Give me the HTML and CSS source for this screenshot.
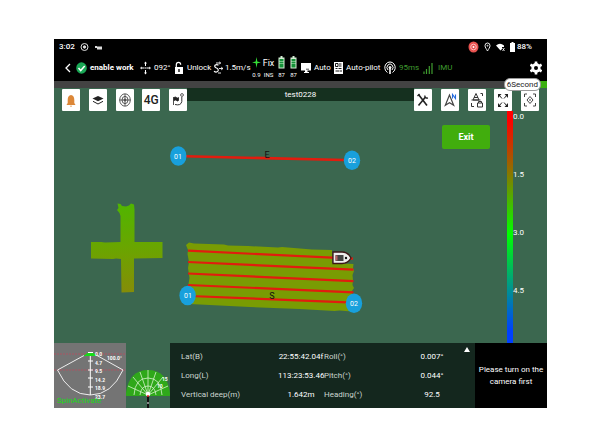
FILE: index.html
```html
<!DOCTYPE html>
<html lang="en">
<head>
<meta charset="utf-8">
<meta name="viewport" content="width=device-width, initial-scale=1">
<title>test0228</title>
<link rel="stylesheet" href="styles.css">
</head>
<body>
<main class="device">
  <header class="header">
    <div class="status">
      <span>3:02</span>
      <svg width="9" height="10" viewBox="0 0 9 10" fill="none" stroke="#ddd"><circle cx="4.500" cy="5" r="3.500"/><circle cx="4.500" cy="5" r="1.200" fill="#ddd"/></svg>
      <svg width="9" height="10" viewBox="0 0 9 10" fill="#ddd"><path d="M1 4h2v.5h5v3H3V6H1z"/></svg>
      <span class="spacer"></span>
      <svg width="11" height="12" viewBox="0 0 11 12" fill="none"><ellipse cx="5.500" cy="6" rx="5" ry="5.500" fill="#e8524f"/><circle cx="5.500" cy="6" r="2.800" stroke="#fbb"/><circle cx="5.500" cy="6" r="1" fill="#fff"/></svg>
      <svg width="7" height="10" viewBox="0 0 7 10" fill="none" stroke="#eee"><path d="M3.500 9C2.500 7 1 5.500 1 3.700a2.500 2.700 0 0 1 5 0C6 5.500 4.500 7 3.500 9z"/><circle cx="3.500" cy="3.700" r=".5"/></svg>
      <svg width="9" height="10" viewBox="0 0 9 10"><path d="M0 3.500Q4 0 8 3.500V5H6v2L4.500 8.500z" fill="#fff"/><path d="M6.500 6l2 3m0-3l-2 3" stroke="#fff" stroke-width=".8"/></svg>
      <span class="battery">
        <svg width="5" height="10" viewBox="0 0 5 10" fill="#fff"><path d="M1.500 0h2v1H5v9H0V1h1.500z"/></svg>
        <span>88%</span>
      </span>
    </div>
    <div class="toolbar">
      <button class="plain" aria-label="Back"><svg width="6" height="12" viewBox="0 0 6 12" fill="none" stroke="#fff" stroke-width="1.300"><path d="M5 2L1 6l4 4"/></svg></button>
      <div class="item strong">
        <svg width="11" height="12" viewBox="0 0 11 12"><ellipse cx="5.500" cy="6" rx="5.300" ry="5.800" fill="#19a755"/><path d="M2.500 6l2.200 2.500L8.700 4" fill="none" stroke="#fff" stroke-width="1.500"/></svg>
        <span>enable work</span>
      </div>
      <div class="item">
        <svg width="11" height="14" viewBox="0 0 11 14" fill="#fff" stroke="#fff"><path d="M5.500 2v3M5.500 9v3M1.500 7h2.700M6.800 7h2.700M4.500 7h2" fill="none"/><path d="M5.500 .5l1.500 2H4zM5.500 13.500l1.500-2H4zM0 7l1.800-1.500v3zM11 7L9.200 5.500v3z" stroke="none"/></svg>
        <span>092°</span>
      </div>
      <div class="item">
        <svg width="10" height="14" viewBox="0 0 10 14"><path d="M2.300 7V3.800a2.200 2.500 0 0 1 4.400 0" fill="none" stroke="#fff" stroke-width="1.200"/><path d="M1 6h8v7H1z" fill="#fff"/><path d="M5 8v3" stroke="#000" stroke-width="1.300"/></svg>
        <span>Unlock</span>
      </div>
      <div class="item tight">
        <svg width="10" height="14" viewBox="0 0 10 14" fill="none" stroke="#fff"><path d="M5.500 4.300Q4 3 2.300 4 .8 5.500 3 6.800q3 1.200 2 3.200-1.500 2-4 .3" stroke-width="1.200"/><path d="M3 2h4M6 7.500h4M5 12h3" stroke-width=".9"/><path d="M6 .8L8 2 6 3.200M8 6l2 1.500L8 9" stroke-width=".7"/></svg>
        <span>1.5m/s</span>
      </div>
      <div class="pair">
        <div class="stack"><svg width="9" height="12" viewBox="0 0 9 12"><path d="M4.500 1l.8 4.500L9 6.500l-3.700.8L4.500 12l-.8-4.700L0 6.500l3.700-1z" fill="#35e035"/></svg><small>0.9</small></div>
        <div class="stack"><span>Fix</span><small>INS</small></div>
      </div>
      <div class="pair">
        <div class="stack"><svg width="7" height="13" viewBox="0 0 7 13"><path d="M2.500 0h2v1.500H6.500v11H.5v-11h2z" fill="#d5eed5"/><path d="M1.500 3h4v2h-4zM1.500 5.500h4v2h-4zM1.500 8h4v3.500h-4z" fill="#159238"/></svg><small>87</small></div>
        <div class="stack"><svg width="7" height="13" viewBox="0 0 7 13"><path d="M2.500 0h2v1.500H6.500v11H.5v-11h2z" fill="#d5eed5"/><path d="M1.500 3h4v2h-4zM1.500 5.500h4v2h-4zM1.500 8h4v3.500h-4z" fill="#159238"/></svg><small>87</small></div>
      </div>
      <div class="item">
        <svg width="10" height="12" viewBox="0 0 10 12" fill="#fff"><path d="M0 1h10v7.500H6.500V10H8v1H3v-1h1V8.500H0z"/><path d="M5 7.200h3" stroke="#000" stroke-width=".7"/></svg>
        <span>Auto</span>
      </div>
      <div class="item">
        <svg width="9" height="12" viewBox="0 0 9 12"><path d="M0 0h9v12H0z" fill="#fff"/><path d="M1.500 1.500h2.500v3H1.500zM5 2h2.500M5 4h2.500M1.500 6.500h2M4.500 6.500h3M1.500 9h4M7 8v2" fill="none" stroke="#000" stroke-width=".9"/></svg>
        <span>Auto-pilot</span>
      </div>
      <div class="item green">
        <svg width="12" height="14" viewBox="0 0 12 14" fill="none" stroke="#fff"><path d="M3.500 11.500A5.200 5.600 0 1 1 8.500 11.500M4 9A3 3.400 0 1 1 8 9"/><circle cx="6" cy="6.500" r="1" fill="#fff"/><path d="M6 7v6" stroke-width="1.600"/></svg>
        <span>95ms</span>
      </div>
      <div class="item green signal">
        <svg width="10" height="12" viewBox="0 0 10 12" fill="none" stroke="#3f9c2f"><path d="M1 12V9.500M3.500 12V7M6.300 12V4M9 12V1" stroke-width="1.200"/></svg>
        <span>IMU</span>
      </div>
      <button class="plain" aria-label="Settings"><svg width="12" height="14" viewBox="0 0 12 14"><g transform="translate(6 7)" fill="#fff"><path d="M-1.300-6.500h2.600v13h-2.600z"/><path d="M-1.300-6.500h2.600v13h-2.600z" transform="rotate(60)"/><path d="M-1.300-6.500h2.600v13h-2.600z" transform="rotate(120)"/><ellipse rx="4.600" ry="5"/><circle r="2" fill="#000"/></g></svg></button>
    </div>
  </header>

  <div class="band"><span class="badge">6Second</span></div>

  <section class="map">
    <svg class="drawing" viewBox="54 88 493 320" role="img" aria-label="Survey map">
      <defs>
        <linearGradient id="cross" x1="0" y1="0" x2="0" y2="1"><stop offset="0" stop-color="#50b500"/><stop offset=".5" stop-color="#6aa500"/><stop offset="1" stop-color="#858c08"/></linearGradient>
      </defs>
      <path fill="url(#cross)" d="M117.500 203.500l3 .5 1.500 2 4 .5 3-1 2-2 3 1 .5 5v32.500h28V258l-28.500.5V292l-12.500.5-.5-33.500-5-.5-3 .5-22-.5V242h10l4 .5 15.500-.5v-26l-1-3-2.500-3 1.500-2z"/>
      <path fill="#799c03" d="M186 245l3-2.500 5 1 30 1 4 1 20 .5 30 1.500 4-.5 30 2.500 20 .5v13l21.500 1-.5 4 1 3-1.500 4 .5 5-.5 5 1.500 3-2 3 .5 18-1 2.500-12-1-5 .5-35-2-50-2-60-3-1-20 1-6-1.500-10 1-6-1.500-8 .5-4z"/>
      <g stroke="#e21c0e" stroke-width="2.200">
        <path d="M188 250.700l165 8M188 262l165.500 7.600M188 273.500l165.500 7.700M188 285l165.500 7.300M190 296l164 6.700"/>
        <path d="M186 156.300l158 3.700" stroke-width="2.600"/>
      </g>
      <path d="M333 252h9q6 0 9 6-3 5.500-9 5.500h-9z" fill="#eee" stroke="#3d1717" stroke-width="1.300"/>
      <path d="M335.500 255h8v6h-8z" fill="#444"/><path d="M335.500 255.500h2v5h-2z" fill="#b66"/><circle cx="346" cy="258" r="1.200" fill="#111"/>
      <g fill="#18a0dc">
        <ellipse cx="178.300" cy="156" rx="8.200" ry="9.800"/><ellipse cx="352" cy="160.300" rx="8.200" ry="9.800"/>
        <ellipse cx="187.600" cy="295.500" rx="8.200" ry="9.800"/><ellipse cx="354" cy="303.300" rx="8.200" ry="9.800"/>
      </g>
      <g class="pin-text"><text x="178" y="159">01</text><text x="352" y="163">02</text><text x="188" y="298">01</text><text x="354" y="306">02</text></g>
      <g class="line-text"><text x="267" y="158">E</text><text x="272" y="299">S</text></g>
    </svg>

    <div class="overlay">
      <nav class="tools">
        <div class="group">
          <button class="tool" aria-label="Alerts"><svg viewBox="0 0 18 22"><path d="M9 6q-3.300.5-3.300 5v3L4.500 16h9l-1.200-2v-3Q12.300 6.500 9 6zM7.800 16.800h2.400L9 18z" fill="#dc8738"/></svg></button>
          <button class="tool" aria-label="Layers"><svg viewBox="0 0 18 22"><path d="M3.500 9.500L9 7l5.500 2.500L9 12.300z" fill="#222"/><path d="M4 12.300L9 15l5-2.700" fill="none" stroke="#222"/></svg></button>
          <button class="tool" aria-label="Center"><svg viewBox="0 0 18 22" fill="none" stroke="#333" stroke-width=".8"><ellipse cx="9" cy="11" rx="5.300" ry="6.200"/><ellipse cx="9" cy="11" rx="3" ry="3.600"/><path d="M9 5v12M3.500 11h11"/><circle cx="9" cy="11" r="1"/></svg></button>
          <button class="tool four-g">4G</button>
          <button class="tool" aria-label="Route"><svg viewBox="0 0 18 22"><path d="M4.500 16V8M5 8.500q1.500-1 2.500 0t2 0v3q-1 1-2 0t-2.500 0z" fill="#222" stroke="#222" stroke-width=".8"/><path d="M6 15.500q6 1.500 6.800-3V8" fill="none" stroke="#333"/><circle cx="13" cy="6" r="1.400" fill="none" stroke="#333" stroke-width=".8"/></svg></button>
        </div>
        <h1 class="title">test0228</h1>
        <div class="group">
          <button class="tool" aria-label="Repair"><svg viewBox="0 0 18 22" fill="none" stroke="#222"><path d="M4.500 5.500l8.500 11" stroke-width="1.600"/><path d="M4.500 16.500l7-8.500" stroke-width="1.600"/><path d="M10.800 6.500q0 3 3.200 2.500M3.500 7l2-2" stroke-width="1.300"/></svg></button>
          <button class="tool" aria-label="North"><svg viewBox="0 0 18 22" fill="none"><path d="M8.500 6L4.300 16.300l4.200-2.500 4.200 2.500z" stroke="#444" stroke-width="1.200"/><path d="M11.500 9.500V5.500l3 4v-4" stroke="#246bdc" stroke-width="1.100"/></svg></button>
          <button class="tool" aria-label="Lock view"><svg viewBox="0 0 18 22" fill="none" stroke="#333"><path d="M5 11l3-6.500L11 11zM6 8.500h4M3.500 11h9"/><path d="M12.500 4.500h2V7M3.500 14v3.500H6"/><path d="M9.500 14h5v4h-5zM10.500 14v-1.500h3V14"/></svg></button>
          <button class="tool" aria-label="Expand"><svg viewBox="0 0 18 22" fill="#222" stroke="#222"><path d="M5 6l3 3.500M13 6l-3 3.500M5 17l3-3.500M13 17l-3-3.500"/><path d="M4 5h3.500L4 9zM14 5h-3.500L14 9zM4 18h3.500L4 14zM14 18h-3.500l3.500-4z" stroke="none"/></svg></button>
          <button class="tool" aria-label="Focus"><svg viewBox="0 0 18 22" fill="none" stroke="#444"><path d="M3.500 8V5H6M12 5h2.500v3M14.500 14v3H12M6 17H3.500v-3M9 7.500l3 3.500-3 3.500L6 11z"/><circle cx="9" cy="11" r=".4"/></svg></button>
        </div>
      </nav>

      <div class="side">
        <button class="exit">Exit</button>
        <div class="legend">
          <div class="ramp"></div>
          <div class="marks"><span>0.0</span><span>1.5</span><span>3.0</span><span>4.5</span></div>
        </div>
      </div>

      <div class="panels">
        <svg class="sonar" viewBox="54 343 72 65" role="img" aria-label="Sonar sector">
          <path d="M54 354h72M54 370h72" stroke="#c3485c" stroke-width=".7" stroke-dasharray="2 1"/>
          <path d="M84 355.500l-26.500 14.500Q69 395 90.300 395T123 370L97 355.500" fill="none" stroke="#eee"/>
          <path d="M90.300 352v43M88 352.500h5M88 361h5M88 370h5M88 378h5M88 387h5" stroke="#fff" fill="none"/>
          <path d="M83.500 356l4-3h6l4 3z" fill="#16dc16"/>
          <g class="sonar-text"><text x="95" y="356">0.0</text><text x="95" y="365">4.7</text><text x="95" y="373">9.5</text><text x="95" y="382">14.2</text><text x="95" y="390">18.9</text><text x="95" y="399">23.7</text><text x="107" y="360">100.0°</text></g>
          <text class="spin" x="57" y="403">SpinActivate</text>
        </svg>
        <svg class="fan" viewBox="126 343 44 65" role="img" aria-label="Depth fan">
          <path d="M126 396v-3Q129 370 148 370t22 23v3z" fill="#2fa81a"/>
          <g fill="none" stroke="#d5f2cc" stroke-width=".8">
            <path d="M134 395q1-17 14-17t14 17M140 395q1-9 8-9t8 9"/>
            <path d="M148 395v-25M148 395l-8-23M148 395l-15-18M148 395l-20-9M148 395l8-23M148 395l15-18M148 395l20-9"/>
          </g>
          <path d="M148 396v12" stroke="#111" stroke-width="2"/>
          <circle cx="148" cy="394" r="2.300" fill="#fff"/><circle cx="148" cy="396" r="1" fill="#e22"/><path d="M147 403h2" stroke="#fff"/>
          <g class="sonar-text"><text x="157" y="388">10</text><text x="162" y="381">15</text></g>
        </svg>
        <div class="data">
          <table>
            <tbody>
              <tr><th scope="row">Lat(B)</th><td>22:55:42.04f</td><th scope="row">Roll(°)</th><td>0.007°</td></tr>
              <tr><th scope="row">Long(L)</th><td>113:23:53.46</td><th scope="row">Pitch(°)</th><td>0.044°</td></tr>
              <tr><th scope="row">Vertical deep(m)</th><td>1.642m</td><th scope="row">Heading(°)</th><td>92.5</td></tr>
            </tbody>
          </table>
          <button class="plain" aria-label="Expand data"><svg width="6" height="5" viewBox="0 0 6 5"><path d="M0 5l3-5 3 5z" fill="#fff"/></svg></button>
        </div>
        <p class="camera">Please turn on the camera first</p>
      </div>
    </div>
  </section>
</main>
</body>
</html>
```
FILE: styles.css
```css
* { box-sizing: border-box; }
body {
  margin: 0;
  background: #fff;
  font: 8px/12px Roboto, "Liberation Sans", sans-serif;
  color: #fff;
}
button { font: inherit; color: inherit; border: 0; padding: 0; margin: 0; }
svg { display: block; flex: none; }
.device { margin: 39px 53px 0 54px; }

.header { background: #000; height: 42px; }
.status { display: flex; align-items: center; gap: 5px; height: 15px; padding: 0 15px 0 5px; font-weight: 500; }
.spacer { flex: 1; }
.battery { display: flex; align-items: center; gap: 2px; }
.toolbar {
  display: grid;
  grid-template-columns: 11px 64px 34px 39px 38px 25px 25px 33px 50px 39px 1fr auto;
  align-items: center;
  height: 27px;
  padding: 0 5px 0 11px;
}
.plain { background: none; display: flex; }
.item { display: flex; align-items: center; gap: 3px; white-space: nowrap; }
.tight { gap: 2px; }
.strong { font-weight: 700; }
.green { color: #3f9c2f; }
.signal { gap: 5px; }
.pair { display: flex; gap: 1px; }
.stack { width: 11px; height: 23px; display: flex; flex-direction: column; align-items: center; justify-content: space-between; white-space: nowrap; }
.stack span { font-size: 9px; line-height: 14px; }
.stack small { font-size: 6px; line-height: 8px; }

.band {
  position: relative;
  height: 7px;
  background: linear-gradient(to left, #3bb010 8px, #434343 8px);
}
.badge {
  position: absolute;
  z-index: 2;
  right: 6px;
  top: -3px;
  padding: 0 2px;
  border: 1px solid #999;
  border-radius: 6px;
  background: #fff;
  color: #222;
  line-height: 11px;
}

.map { position: relative; background: #3b674f; }
.drawing { width: 100%; height: auto; }
.pin-text { font-size: 7px; fill: #fff; text-anchor: middle; }
.line-text { font-size: 9px; fill: #111; text-anchor: middle; }
.overlay { position: absolute; inset: 0; display: flex; flex-direction: column; }

.tools { display: flex; padding: 0 8px; height: 23px; }
.group { display: flex; justify-content: space-between; align-items: flex-end; width: 125px; }
.tool { width: 18px; height: 22px; background: #fff; color: #222; border-radius: 1px; }
.tool svg { width: 18px; height: 22px; }
.four-g { font-size: 12px; font-weight: 500; }
.title { flex: 1; margin: 0; height: 13px; background: #15301f; font-size: 8px; line-height: 13px; font-weight: 400; text-align: center; }

.side { flex: 1; display: flex; justify-content: flex-end; align-items: flex-start; gap: 17px; }
.exit { width: 48px; height: 24px; margin-top: 14px; border-radius: 2px; background: #41ad0d; font-size: 9px; font-weight: 700; }
.legend { display: flex; align-self: stretch; width: 40px; }
.ramp { width: 6px; background: linear-gradient(#f00, #f00 4%, #0f0 53%, #0040ff 95%); }
.marks { display: grid; grid-template-rows: repeat(4, 1fr); }

.panels { display: grid; grid-template-columns: 72px 44px 1fr 72px; height: 65px; }
.sonar { background: #747474; width: 72px; height: 65px; }
.fan { width: 44px; height: 65px; }
.sonar-text { font-size: 5px; font-weight: 700; fill: #fff; }
.spin { font-size: 8px; fill: #16dc16; }
.data { display: flex; align-items: flex-start; justify-content: space-between; padding: 4px 5px 4px 11px; background: #14271e; }
.data table { border-collapse: collapse; table-layout: fixed; width: 274px; }
.data th, .data td { height: 19px; padding: 0; white-space: nowrap; }
.data th { text-align: left; font-weight: 400; color: #ccd6d0; width: 97px; }
.data td { text-align: center; width: 46px; }
.data th + td + th { width: 85px; }
.camera { margin: 0; background: #000; display: flex; align-items: center; justify-content: center; text-align: center; }
```
